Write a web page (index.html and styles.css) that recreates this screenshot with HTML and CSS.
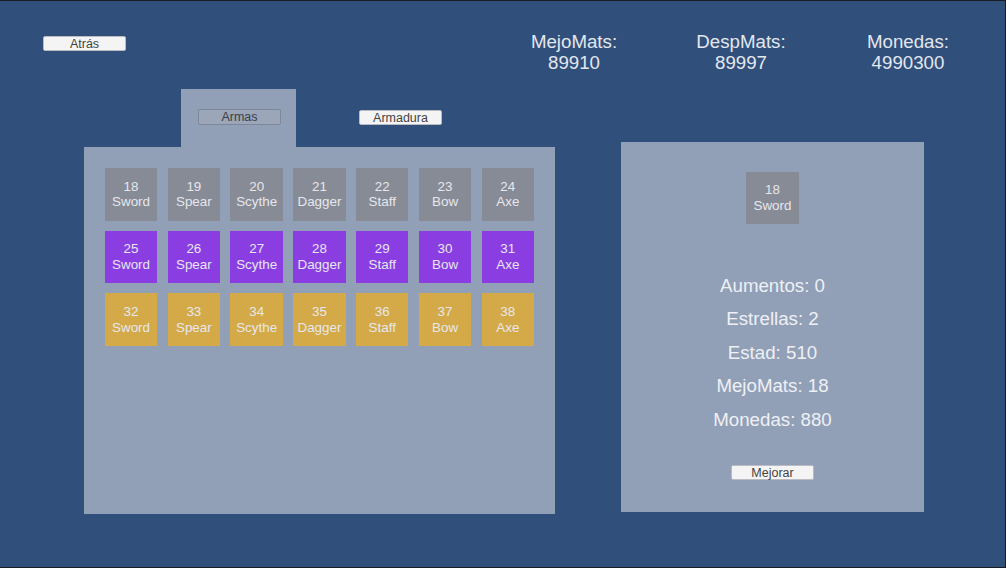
FILE: index.html
```html
<!DOCTYPE html>
<html lang="es">
<head>
<meta charset="utf-8">
<title>Mejora</title>
<link rel="stylesheet" href="styles.css">
</head>
<body>
<div class="screen">
  <header class="topbar">
    <button class="btn btn-back">Atrás</button>
    <div class="stats">
      <div class="stat">MejoMats:<br>89910</div>
      <div class="stat">DespMats:<br>89997</div>
      <div class="stat">Monedas:<br>4990300</div>
    </div>
  </header>
  <main class="main">
    <section class="left">
      <div class="tabs">
        <div class="tab-active"><button class="btn btn-tab">Armas</button></div>
        <button class="btn btn-armadura">Armadura</button>
      </div>
      <div class="inventory">
        <div class="tile gray">18<br>Sword</div>
        <div class="tile gray">19<br>Spear</div>
        <div class="tile gray">20<br>Scythe</div>
        <div class="tile gray">21<br>Dagger</div>
        <div class="tile gray">22<br>Staff</div>
        <div class="tile gray">23<br>Bow</div>
        <div class="tile gray">24<br>Axe</div>
        <div class="tile purple">25<br>Sword</div>
        <div class="tile purple">26<br>Spear</div>
        <div class="tile purple">27<br>Scythe</div>
        <div class="tile purple">28<br>Dagger</div>
        <div class="tile purple">29<br>Staff</div>
        <div class="tile purple">30<br>Bow</div>
        <div class="tile purple">31<br>Axe</div>
        <div class="tile gold">32<br>Sword</div>
        <div class="tile gold">33<br>Spear</div>
        <div class="tile gold">34<br>Scythe</div>
        <div class="tile gold">35<br>Dagger</div>
        <div class="tile gold">36<br>Staff</div>
        <div class="tile gold">37<br>Bow</div>
        <div class="tile gold">38<br>Axe</div>
      </div>
    </section>
    <section class="detail">
      <div class="tile gray preview">18<br>Sword</div>
      <div class="detail-stats">
        <div>Aumentos: 0</div>
        <div>Estrellas: 2</div>
        <div>Estad: 510</div>
        <div>MejoMats: 18</div>
        <div>Monedas: 880</div>
      </div>
      <button class="btn btn-mejorar">Mejorar</button>
    </section>
  </main>
</div>
</body>
</html>
```
FILE: styles.css
```css
* { box-sizing: border-box; }
html, body { margin: 0; padding: 0; }
body {
  background: #1b1c22;
  width: 1006px;
  height: 568px;
  overflow: hidden;
  font-family: "Liberation Sans", Arial, sans-serif;
}
.screen {
  width: 1005px;
  height: 566px;
  margin-top: 1px;
  background: #304f7a;
}
.btn {
  display: block;
  height: 15px;
  width: 83px;
  padding: 0;
  margin: 0;
  border: 1px solid #b9bcc2;
  border-radius: 2px;
  background: #f4f4f4;
  color: #444444;
  font-family: "Liberation Sans", Arial, sans-serif;
  font-size: 12.5px;
  line-height: 14px;
  text-align: center;
}
.topbar {
  height: 88px;
  display: flex;
  align-items: flex-start;
  padding: 30px 0 0 43px;
}
.btn-back { margin-top: 5px; }
.stats {
  display: flex;
  gap: 47px;
  margin-left: 388px;
}
.stat {
  width: 120px;
  text-align: center;
  color: #e3e7ef;
  font-size: 18.7px;
  line-height: 21px;
}
.main {
  display: flex;
  align-items: flex-start;
  padding-left: 84px;
}
.left { width: 471px; }
.tabs {
  display: flex;
  align-items: flex-start;
  height: 58px;
}
.tab-active {
  margin-left: 97px;
  width: 115px;
  height: 58px;
  background: #91a0b7;
  padding: 20px 0 0 17px;
}
.btn-tab {
  height: 16px;
  background: #9ba6b9;
  border-color: #7c879b;
  color: #3a3f48;
  line-height: 15px;
}
.btn-armadura {
  margin-left: 63px;
  margin-top: 21px;
}
.inventory {
  width: 471px;
  height: 367px;
  background: #91a0b7;
  padding: 21px 21px 21px 20.8px;
  display: grid;
  grid-template-columns: repeat(7, 52.5px);
  grid-auto-rows: 52.5px;
  column-gap: 10.3px;
  row-gap: 10.2px;
  align-content: start;
}
.tile {
  display: flex;
  align-items: center;
  justify-content: center;
  text-align: center;
  color: #e6e7ee;
  font-size: 13.4px;
  line-height: 15.7px;
}
.gray { background: #868b95; }
.purple { background: #8a3ee2; }
.gold { background: #d4aa48; }
.detail {
  width: 303px;
  height: 370px;
  margin-left: 66px;
  margin-top: 53px;
  background: #91a0b7;
  padding-top: 30px;
  display: flex;
  flex-direction: column;
  align-items: center;
}
.preview {
  width: 53px;
  height: 52px;
}
.detail-stats {
  margin-top: 44.5px;
  text-align: center;
  color: #eef0f5;
  font-size: 18.7px;
  line-height: 33.5px;
}
.btn-mejorar { margin-top: 29px; }
```
